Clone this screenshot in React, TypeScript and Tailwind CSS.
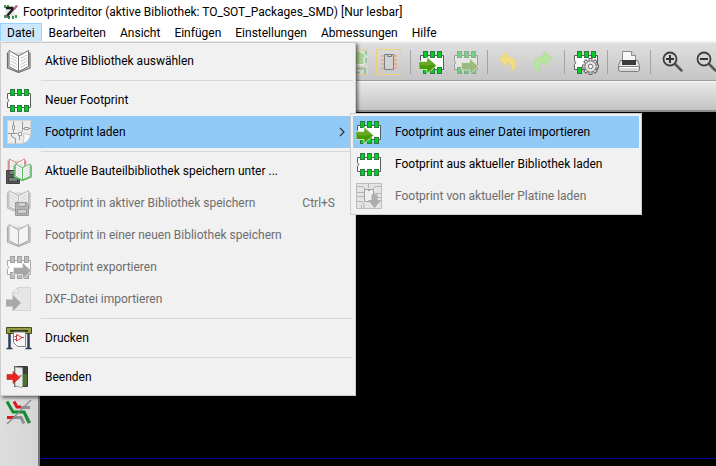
import React from "react";

type IconProps = { className?: string };

function Svg({ children, className = "" }: { children: React.ReactNode; className?: string }) {
  return (
    <svg viewBox="0 0 26 26" width="26" height="26" className={`shrink-0 ${className}`} aria-hidden="true">
      {children}
    </svg>
  );
}

const PAD_X = [4, 11, 18];

function FootprintShape({ pad = "#00cf22", line = "#5a5a5e", edge = "#2f7a40", bottom = 3 }: { pad?: string; line?: string; edge?: string; bottom?: number }) {
  return (
    <g>
      <path d="M1.500 6.500h23v14h-23v-5q2.500-2 0-4z" fill="#fff" stroke={line} />
      {PAD_X.map((x) => (
        <rect key={x} x={x + 0.5} y="2.500" width="4" height="6" fill={pad} stroke={edge} />
      ))}
      {PAD_X.slice(0, bottom).map((x) => (
        <rect key={x} x={x + 0.5} y="18.500" width="4" height="6" fill={pad} stroke={edge} />
      ))}
    </g>
  );
}

function FootprintIcon() {
  return <Svg><FootprintShape /></Svg>;
}

function ImportIcon() {
  return (
    <Svg>
      <FootprintShape />
      <path d="M0 12.500h8V8l9.500 8.500-9.500 8.500v-4.500H0z" fill="#4a9a08" stroke="#e9f3dd" strokeWidth=".8" />
      <path d="M.5 13h8.500V9.500l6.500 6Q8 17 .5 16z" fill="#6aa82a" />
    </Svg>
  );
}

function ExportIcon({ className }: IconProps) {
  return (
    <Svg className={className}>
      <FootprintShape />
      <path d="M8.500 13.500h8v-4.500l9 8.500-9 8v-4.500h-8z" fill="#5da51c" stroke="#fff" strokeWidth=".8" />
    </Svg>
  );
}

function ExportGreyIcon() {
  return (
    <Svg>
      <FootprintShape pad="#bdbdbd" line="#a8a8a8" edge="#a2a2a2" />
      <path d="M7.500 13.500h9v-5l9 8.500-9 8.500v-5h-9z" fill="#a6a6a6" stroke="#e8e8e8" strokeWidth=".8" />
    </Svg>
  );
}

function BookShape({ page = "#fff", line = "#6d6d6d", text = "#c2c2c2", lines = true }: { page?: string; line?: string; text?: string; lines?: boolean }) {
  return (
    <g strokeLinejoin="round">
      <path d="M1.500 4.500v15.500l11 4.500 11.500-4.500V4.500" fill="#d8d8d8" stroke={line} strokeWidth="1.200" />
      <path d="M3 2.500 12.500 8v15.500L3 18.500z" fill={page} stroke={line} />
      <path d="M22.500 2.500 12.500 8v15.500l10-5z" fill={page} stroke={line} />
      {lines && (
        <path d="m4.500 7 6.500 3.500M4.500 10l6.500 3.500M4.500 13l6.500 3.500M4.500 16l6.500 3.500M21 7l-6.500 3.500M21 10l-6.500 3.500M21 13l-6.500 3.500M21 16l-6.500 3.500" stroke={text} fill="none" />
      )}
    </g>
  );
}

function BookIcon() {
  return <Svg><BookShape /></Svg>;
}

function BookBlankIcon() {
  return <Svg><BookShape line="#ababab" page="#f4f4f4" lines={false} /></Svg>;
}

function Floppy({ body, line, shade }: { body: string; line: string; shade: string }) {
  return (
    <g stroke={line}>
      <path d="M.5.5h11l2 2v11H.5z" fill={body} />
      <path d="M3 .5h7.500v4H3z" fill={shade} />
      <path d="M2.500 7.500h9v4h-9z" fill={shade} />
    </g>
  );
}

function SaveLibrariesIcon() {
  return (
    <Svg>
      <g transform="translate(1 -1) scale(.78)"><BookShape line="#cf6c6c" /></g>
      <g transform="translate(0 12)"><Floppy body="#5a5a5a" line="#3f3f3f" shade="#7d7d7d" /></g>
      <g transform="translate(7 4) scale(.76)"><BookShape line="#35ac3e" /></g>
    </Svg>
  );
}

function SaveLibraryIcon() {
  return (
    <Svg>
      <g transform="translate(0 -2)"><BookShape line="#b9b9b9" page="#eee" text="#d0d0d0" /></g>
      <g transform="translate(9 12)"><Floppy body="#b5b5b5" line="#989898" shade="#cfcfcf" /></g>
    </Svg>
  );
}

function LoadIcon() {
  return (
    <Svg>
      <path d="M1.500 1.500h23v15q-1 6-8 8h-15z" fill="#ececec" stroke="#d2d4d6" />
      <g fill="none" stroke="#96989a">
        <path d="M7.500 2v4M7.500 11v3.500M2 14.500h5.500M5.500 14.500v3l4 2v5M7.500 14.500h4M13.500 17v4M15 13.500l1.500-2V2.500M16.500 9.500h2M22.500 9.500h2" />
        <path d="M6.500 6.500h2v4h-2zM18.500 8.500h4v2h-4zM12.500 13.500h3v3h-3z" fill="#fff" />
      </g>
      <path d="m24.500 16-7-1.500q1.500 5-1 10 7-2 8-8.500z" fill="#fafafa" stroke="#b9bcbe" strokeWidth=".8" />
    </Svg>
  );
}

function DxfIcon() {
  return (
    <Svg>
      <path d="M6.500 7 12 1.500h12.500v23h-18z" fill="#e6e6e6" stroke="#d5d5d5" />
      <path d="M6.500 7H12V1.500z" fill="#f7f7f7" stroke="#cdcdcd" />
      <path d="M0 13.500h7V9l8 8-8 8v-4.500H0z" fill="#a8a8a8" />
    </Svg>
  );
}

function PlotIcon() {
  return (
    <Svg>
      <path d="M3.500 8v15M22.500 8v15" stroke="#2c3c58" strokeWidth="2.500" />
      <path d="M.5 23.500h6M19.500 23.500h6" stroke="#2c3c58" strokeWidth="1.500" />
      <path d="M.5 2.500h25v6H.5z" fill="#929b45" stroke="#454d16" />
      <path d="M4 5h18v2H4z" fill="#333a16" />
      <path d="M7.500 7v10.500l4 4h8V7z" fill="#f6f6f6" stroke="#858585" />
      <path d="m10.500 9.500 5.500 3-5.500 3.500zM8.500 11.500h2M8.500 14.500h2M16 12.500h2" fill="none" stroke="#c63a48" />
    </Svg>
  );
}

function ExitIcon() {
  return (
    <Svg>
      <path d="M8.500 2.500h13v20h-13z" fill="#4b7031" stroke="#3c3c3c" />
      <path d="M16 3h5v7h-5z" fill="#3a423a" />
      <path d="m9 3 7.500 1v19.500L9 22z" fill="#ececec" stroke="#a5a5a5" />
      <circle cx="14.500" cy="12" r="1" fill="#666" />
      <path d="M1 10.500h6V7.500l7 6-7 6v-4H1z" fill="#e92420" stroke="#c81a16" strokeWidth=".6" />
    </Svg>
  );
}

function BoardGreyIcon() {
  return (
    <Svg>
      <path d="M.5.5h25v25H.5z" fill="#e4e4e4" stroke="#bdbdbd" />
      <g fill="none" stroke="#b4b4b4">
        <path d="M1 3.500h6l2 3M1 9.500h7M1 13.500h7M1 18.500h5l2 3v4M5.500 22v3M17 6.500l2-3h6M17 10.500h8M17 14.500h8M12.500 1v4" />
        <path d="M8.500 6.500h9v12h-9z" fill="#efefef" stroke="#a0a0a0" />
        <path d="M11.500 6.500q1.500 3 3 0" stroke="#a0a0a0" />
      </g>
      <path d="M15.500 11.500h6V17h4L18.500 25 12 17h3.500z" fill="#adadad" />
    </Svg>
  );
}

function BoardUpdateIcon() {
  return (
    <Svg className="opacity-60">
      <path d="M.5.5h26v25H.5z" fill="#ddd9c8" stroke="#f1cf62" />
      <path d="M14 19.500h4M20 19.500h3M23 19v6M14 23.500h4M24 2v12" stroke="#48b87a" strokeWidth="1.500" fill="none" />
      <path d="M17 18h3v3h-3z" fill="#e78d4d" />
      <path d="M13 15.500V8H8l8.500-7 9 7H22v7.500z" fill="#8ccf68" stroke="#fff" />
    </Svg>
  );
}

function ChipIcon() {
  return (
    <Svg>
      <path d="M.5.5h25v25H.5z" fill="none" stroke="#eed17a" />
      <path d="M5 7h3M5 11h3M5 15h3M5 19h3M18 7h3M18 11h3M18 15h3M18 19h3" stroke="#edae8d" strokeWidth="2" />
      <path d="M8.500 5.500h9v15h-9z" fill="#d2d2d2" stroke="#7e7e7e" />
      <path d="M11.500 5.500v2h4v-2" fill="none" stroke="#7e7e7e" />
    </Svg>
  );
}

function UndoIcon() {
  return (
    <Svg>
      <path d="m3 10 8-7v4.500q9 .5 9 8.500 0 4-5 6.500 2-9-4-9.500v4.500z" fill="#f4dc82" stroke="#e9cf72" strokeWidth=".6" />
    </Svg>
  );
}

function RedoIcon() {
  return (
    <Svg>
      <path d="m22 9-8-6v4q-10 .5-10 9 0 4 5.500 7-2-9 4.500-9.500V17z" fill="#b8e5a0" stroke="#a9d992" strokeWidth=".6" />
    </Svg>
  );
}

const TEETH = [0, 45, 90, 135, 180, 225, 270, 315];

function FootprintSettingsIcon() {
  return (
    <Svg>
      <FootprintShape bottom={1} />
      <g transform="translate(17.500 17.500)" stroke="#666" fill="#e4e4e4">
        {TEETH.map((a) => (
          <rect key={a} x="-1.500" y="-8" width="3" height="4" transform={`rotate(${a})`} />
        ))}
        <circle r="5.500" />
        <circle r="5" stroke="none" />
        <circle r="2.200" fill="#fff" />
      </g>
    </Svg>
  );
}

function PrinterIcon() {
  return (
    <Svg>
      <path d="M6.500 12V2.500h9l4 4V12z" fill="#f7f7f7" stroke="#8b8b8b" />
      <path d="M15.500 2.500v4h4" fill="#ddd" stroke="#8b8b8b" />
      <path d="M4.500 11.500h17l2 5v3h-21v-3z" fill="#e9e9e9" stroke="#777" />
      <path d="M6 11h14v5H6z" fill="#3b3b3b" />
      <path d="M2.500 17.500h21v4l-2 1h-17l-2-1z" fill="#d8d8d8" stroke="#808080" />
      <path d="M4 18.500h18" stroke="#fff" />
    </Svg>
  );
}

function ZoomIcon({ plus = false }: { plus?: boolean }) {
  return (
    <Svg>
      <path d="m16 15 6.500 6.500" stroke="#555" strokeWidth="2.500" strokeLinecap="round" />
      <circle cx="11" cy="10" r="6.500" fill="#d4d4d4" stroke="#3e3e3e" strokeWidth="1.800" />
      <path d={plus ? "M7 10h8M11 6v8" : "M7 10h8"} stroke="#333" strokeWidth="2" />
    </Svg>
  );
}

function PadSketchIcon() {
  return (
    <Svg>
      <g fill="none" strokeWidth="3">
        <path d="M8 1.500 11 7h4" stroke="#d31b22" />
        <path d="M15 7.500h9M8 17.500h7l3 6M18 12l6 11" stroke="#909090" />
        <path d="M1 17.500h7" stroke="#d31b22" />
        <path d="M1 1.500 7 12h11l5 11" stroke="#118f2c" />
      </g>
      <path d="M25 0 1 24" stroke="#888" strokeWidth="1.200" />
    </Svg>
  );
}

function AppIcon() {
  return (
    <svg viewBox="0 0 16 16" width="16" height="16" aria-hidden="true" className="shrink-0">
      <path d="M2.500 2h9v11h-9z" fill="#dfe6df" />
      <path d="M1 1h2v3H1zM4 1h2v3H4zM1 11h2v3H1zM5 12h2v3H5zM9 12h2v3H9zM12 11h2v3h-2z" fill="#2f9c45" />
      <path d="M3 4h6v2M11 4 4 12" stroke="#1d1d1d" strokeWidth="2.500" fill="none" />
      <path d="m10 5 3-4 2 1-3 4z" fill="#b65b93" />
      <path d="m3 14 1-3 3 2z" fill="#444" />
    </svg>
  );
}

const MENUS = ["Datei", "Bearbeiten", "Ansicht", "Einfügen", "Einstellungen", "Abmessungen", "Hilfe"];

type ItemProps = {
  icon: React.ReactNode;
  label: string;
  shortcut?: string;
  disabled?: boolean;
  active?: boolean;
  submenu?: boolean;
};

function MenuItem({ icon, label, shortcut, disabled, active, submenu }: ItemProps) {
  return (
    <button
      type="button"
      role="menuitem"
      disabled={disabled}
      aria-haspopup={submenu ? "menu" : undefined}
      className={`flex h-8 w-full items-center pl-[3px] text-left ${active ? "bg-[#91c9f7]" : ""} ${disabled ? "text-[#6d6d6d]" : "text-black"}`}
    >
      {icon}
      <span className="ml-[13px] grow whitespace-nowrap">{label}</span>
      {shortcut && <span className="pr-[18px]">{shortcut}</span>}
      {submenu && (
        <svg viewBox="0 0 6 10" width="6" height="10" className="mr-2" aria-hidden="true">
          <path d="m1 1 4 4-4 4" fill="none" stroke="#333" strokeWidth="1.200" />
        </svg>
      )}
    </button>
  );
}

function MenuSeparator() {
  return <div role="separator" className="my-[3px] ml-[38px] h-px bg-[#d7d7d7]" />;
}

function ToolButton({ label, children, disabled }: { label: string; children: React.ReactNode; disabled?: boolean }) {
  return (
    <button type="button" aria-label={label} disabled={disabled} className="shrink-0">
      {children}
    </button>
  );
}

function ToolSeparator() {
  return <div className="h-6 w-px shrink-0 bg-[#a3a3a3]" />;
}

export default function App() {
  return (
    <div className="relative flex h-screen flex-col overflow-hidden bg-white font-['Roboto','Noto_Sans',sans-serif] text-[12px] leading-4 text-black">
      <header className="flex h-[23px] shrink-0 items-center gap-1 pl-[3px]">
        <AppIcon />
        <h1 className="whitespace-nowrap">Footprinteditor (aktive Bibliothek: TO_SOT_Packages_SMD) [Nur lesbar]</h1>
      </header>
      <nav className="flex h-[18px] shrink-0" aria-label="Menü">
        {MENUS.map((name, i) => (
          <button
            key={name}
            type="button"
            className={`h-[19px] px-[7px] ${i === 0 ? "bg-[#cce8ff] shadow-[inset_0_0_0_1px_#99d1ff]" : ""}`}
          >
            {name}
          </button>
        ))}
      </nav>

      <div className="flex h-10 shrink-0 items-center gap-2 overflow-hidden border-t-2 border-b border-t-[#efefef] border-b-[#9c9c9c] bg-linear-to-b from-[#dfdfdf] to-[#c5c5c5] pl-[342px]">
        <ToolButton label="Platine aktualisieren" disabled><BoardUpdateIcon /></ToolButton>
        <ToolButton label="Bauteil einfügen" disabled><ChipIcon /></ToolButton>
        <ToolSeparator />
        <ToolButton label="Footprint importieren"><ImportIcon /></ToolButton>
        <ToolButton label="Footprint exportieren" disabled><ExportIcon className="opacity-45" /></ToolButton>
        <ToolSeparator />
        <ToolButton label="Rückgängig" disabled><UndoIcon /></ToolButton>
        <ToolButton label="Wiederholen" disabled><RedoIcon /></ToolButton>
        <ToolSeparator />
        <ToolButton label="Footprint-Eigenschaften"><FootprintSettingsIcon /></ToolButton>
        <ToolSeparator />
        <ToolButton label="Drucken"><PrinterIcon /></ToolButton>
        <ToolSeparator />
        <ToolButton label="Vergrößern"><ZoomIcon plus /></ToolButton>
        <ToolButton label="Verkleinern"><ZoomIcon /></ToolButton>
      </div>
      <div className="h-[31px] shrink-0 border-t border-b-2 border-t-[#f6f6f6] border-b-[#8c8c8c] bg-linear-to-b from-[#e9e9e9] to-[#c3c3c3]" />

      <div className="flex min-h-0 grow">
        <aside className="flex w-10 shrink-0 flex-col justify-end border-r-2 border-r-[#777] bg-linear-to-r from-[#dedede] to-[#d5d5d5] pb-10 pl-1.5">
          <ToolButton label="Pads als Umriss zeigen"><PadSketchIcon /></ToolButton>
        </aside>
        <main className="flex grow flex-col justify-end bg-black pb-[7px]">
          <div className="h-px bg-[#0000a0]" />
        </main>
      </div>

      <div role="menu" aria-label="Datei" className="absolute top-[42px] left-0 w-[356px] border border-[#cccccc] bg-[#f1f1f1] p-0.5 shadow-[2px_2px_3px_rgba(0,0,0,0.5)]">
        <MenuItem icon={<BookIcon />} label="Aktive Bibliothek auswählen" />
        <MenuSeparator />
        <MenuItem icon={<FootprintIcon />} label="Neuer Footprint" />
        <MenuItem icon={<LoadIcon />} label="Footprint laden" active submenu />
        <MenuSeparator />
        <MenuItem icon={<SaveLibrariesIcon />} label="Aktuelle Bauteilbibliothek speichern unter ..." />
        <MenuItem icon={<SaveLibraryIcon />} label="Footprint in aktiver Bibliothek speichern" shortcut="Ctrl+S" disabled />
        <MenuItem icon={<BookBlankIcon />} label="Footprint in einer neuen Bibliothek speichern" disabled />
        <MenuItem icon={<ExportGreyIcon />} label="Footprint exportieren" disabled />
        <MenuItem icon={<DxfIcon />} label="DXF-Datei importieren" disabled />
        <MenuSeparator />
        <MenuItem icon={<PlotIcon />} label="Drucken" />
        <MenuSeparator />
        <MenuItem icon={<ExitIcon />} label="Beenden" />
      </div>

      <div role="menu" aria-label="Footprint laden" className="absolute top-[113px] left-[350px] w-[292px] border border-[#cccccc] bg-[#f1f1f1] p-0.5">
        <MenuItem icon={<ImportIcon />} label="Footprint aus einer Datei importieren" active />
        <MenuItem icon={<FootprintIcon />} label="Footprint aus aktueller Bibliothek laden" />
        <MenuItem icon={<BoardGreyIcon />} label="Footprint von aktueller Platine laden" disabled />
      </div>
    </div>
  );
}
